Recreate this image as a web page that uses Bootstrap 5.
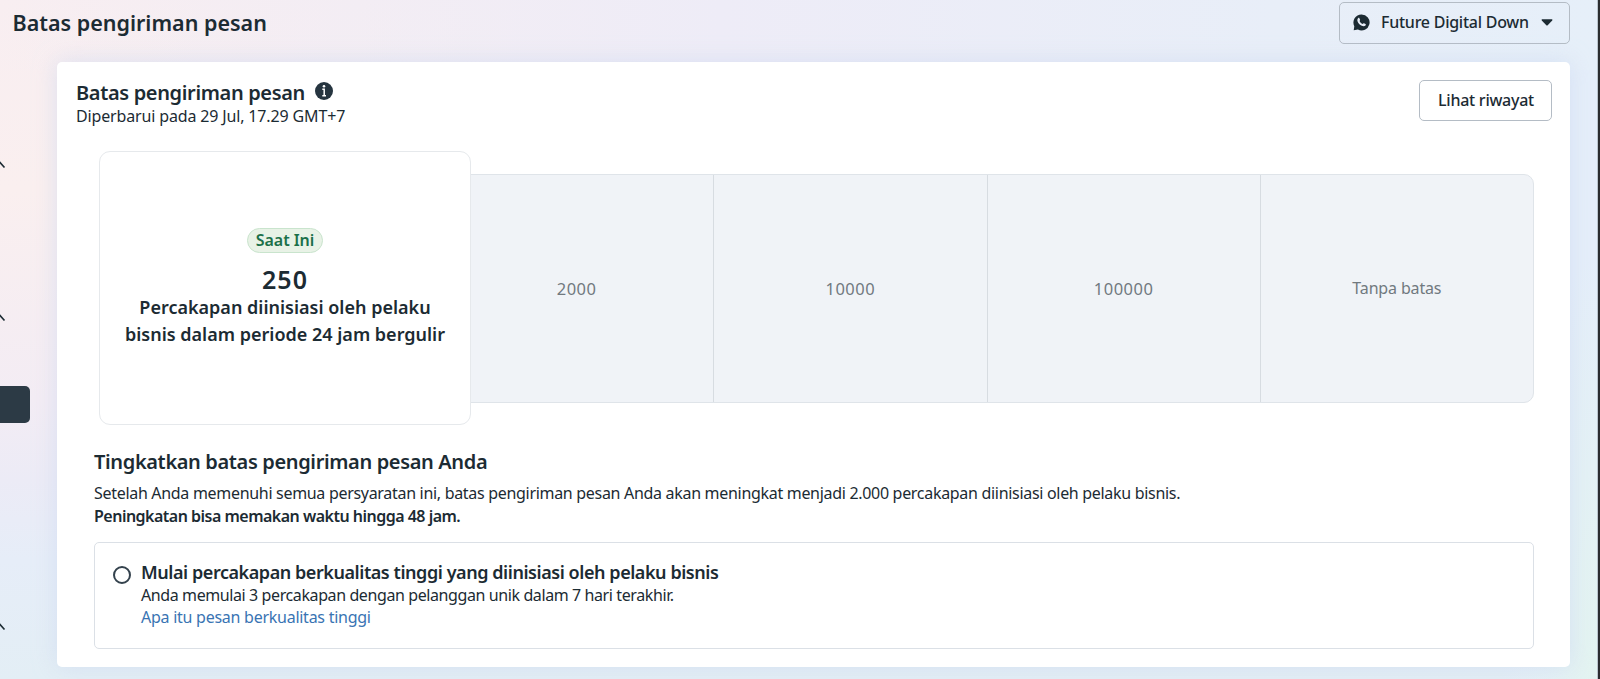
<!DOCTYPE html>
<html lang="id">
<head>
<meta charset="utf-8">
<meta name="viewport" content="width=device-width, initial-scale=1">
<title>Batas pengiriman pesan</title>
<link href="https://cdn.jsdelivr.net/npm/bootstrap@5.3.0/dist/css/bootstrap.min.css" rel="stylesheet">
<style>
  body{font-family:"Noto Sans","Open Sans",sans-serif;font-size:16px;line-height:23px;color:#1c2b33;overflow:hidden;
    background:
      radial-gradient(ellipse 90px 430px at 1600px 679px,#e3f4f0 0,#e3f4f000 100%),
      linear-gradient(90deg,#f9eef000 0,#eeecf7 45%,#e8eef8 80%,#e6eff9 100%) 0 0/100% 70px no-repeat,
      linear-gradient(90deg,#e3edf500 1500px,#e5eefa 1560px) no-repeat,
      linear-gradient(180deg,#f8eef1 0,#faefef 190px,#f3ecf4 400px,#ecebf6 480px,#e6edf8 560px,#e3eef5 679px)}
  .page-frame{height:679px;border-right:2px solid #2a2c2f;box-shadow:inset -1px 0 #b9c4cd}
  .topbar{height:45px;padding:0 28px 0 12.5px}
  .page-title{font-size:21.5px;line-height:28px}
  .btn-meta{height:41px;border:1px solid #b4bcc5;border-radius:5px;color:#1c2b33;font-weight:500;letter-spacing:-.25px;padding:0 17px 1px 18px;background:#fff}
  .btn-picker{height:42px;width:231px;padding:0 16px 1px 13px;margin-top:0;background:transparent}
  .rail{width:57px}
  .rail svg{display:block;height:8px;width:6px}
  .rail-active{width:30px;height:37px;background:#2c3a45;border-radius:0 5px 5px 0}
  .panel{height:605px;width:1513px;padding:19px 18px 0 19px;border-radius:5px;background:#fff;box-shadow:0 0 22px #c9d6ee99}
  .panel-title{font-size:20px;line-height:24px;letter-spacing:-.35px}
  .tiers{margin:0 18px 0 23px;height:274px}
  .tier-now{width:372px;height:274px;margin-right:-32px;padding-top:76px;border:1px solid #e6e9ec;border-radius:11px;background:#fff;z-index:1;font-size:18px;line-height:27px}
  .now-badge{height:25px;line-height:22px;padding:0 8px;border:1px solid #c9e4cd;border-radius:13px;background:#e8f2e6;color:#1b7049;font-size:16px;letter-spacing:-.05px;margin-bottom:11px}
  .now-count{font-size:25px;line-height:30px;letter-spacing:1.1px}
  .tier-rest{height:229px;margin-top:1px;border:1px solid #dfe4e9;border-radius:0 10px 10px 0;background:#f0f3f7;color:#71797f;font-size:16.5px;letter-spacing:.55px;overflow:hidden}
  .tier-rest>div+div{border-left:1px solid #d7dce1}
  .tier-rest .tier-open{font-size:16px;letter-spacing:-.15px}
  .steps{margin:23px 18px 0}
  .steps h2{font-size:20px;line-height:28px;letter-spacing:-.36px;margin-bottom:6px}
  .requirement{height:107px;border:1px solid #dbe0e6;border-radius:5px;padding:17px 18px 0}
  .requirement h3{font-size:18px;line-height:24px;letter-spacing:-.44px}
  .ring{width:18px;height:18px;border:2px solid #34424d;border-radius:50%;margin:6px 10px 0 0}
  .help-link{color:#3974b3}
</style>
</head>
<body>
<div class="page-frame">
  <header class="topbar d-flex align-items-center justify-content-between">
    <h1 class="page-title fw-semibold mb-0">Batas pengiriman pesan</h1>
    <button class="btn btn-meta btn-picker d-flex align-items-center" type="button">
      <svg width="17" height="17" viewBox="0 0 17 17" class="me-2"><path fill="#1c2b33" d="M8.5.5a8 8 0 1 1-3.600 15.100L.7 16.300l.6-4.100A8 8 0 0 1 8.500.5z"/><path fill="#e8eef8" d="M5.200 4.100c.4-.4 1-.4 1.200.1l.7 1.500c.2.4-.6 1-.5 1.400.5 1.300 1.600 2.400 3 2.900.4.1 1-.9 1.400-.7l1.500.8c.5.3.4.9 0 1.400-1 1-2.300 1-4.300 0C6.400 10.600 5.300 9.300 4.600 7.500c-.5-1.400-.2-2.700.6-3.400z"/></svg>
      <span style="margin-left:3px">Future Digital Down</span>
      <svg width="12" height="8" viewBox="0 0 12 8" class="ms-auto"><path fill="#1c2b33" d="M1.300 1.300h9.400c.7 0 .9.7.5 1.200L6.700 7.200a1 1 0 0 1-1.400 0L.8 2.500C.4 2 .6 1.300 1.300 1.300z"/></svg>
    </button>
  </header>
  <div class="d-flex">
    <nav class="rail flex-shrink-0">
      <svg style="margin-top:116px" viewBox="0 0 6 8"><path d="M-4 5.500 0 1.500 4.500 6.500" fill="none" stroke="#1c2b33" stroke-width="1.600"/></svg>
      <svg style="margin-top:145px" viewBox="0 0 6 8"><path d="M-4 5.500 0 1.500 4.500 6.500" fill="none" stroke="#1c2b33" stroke-width="1.600"/></svg>
      <div class="rail-active" style="margin-top:64px"></div>
      <svg style="margin-top:200px" viewBox="0 0 6 8"><path d="M-4 5.500 0 1.500 4.500 6.500" fill="none" stroke="#1c2b33" stroke-width="1.600"/></svg>
    </nav>
    <main class="panel" style="margin-top:17px">
      <div class="d-flex justify-content-between" style="height:70px">
        <div>
          <div class="d-flex">
            <h2 class="panel-title fw-semibold mb-0">Batas pengiriman pesan</h2>
            <svg width="18" height="18" viewBox="0 0 18 18" style="margin:1px 0 0 10px"><circle cx="9" cy="9" r="9" fill="#263540"/><circle cx="9" cy="4.300" r="1.300" fill="#fff"/><path d="M7.300 7.300h1.900v6.500M7.300 13.800h3.700" fill="none" stroke="#fff" stroke-width="1.500"/></svg>
          </div>
          <div style="letter-spacing:-.15px">Diperbarui pada 29 Jul, 17.29 GMT+7</div>
        </div>
        <button class="btn btn-meta" type="button" style="margin-top:-1px">Lihat riwayat</button>
      </div>
      <div class="tiers d-flex align-items-center">
        <div class="tier-now position-relative d-flex flex-column align-items-center flex-shrink-0 text-center fw-semibold">
          <span class="now-badge">Saat Ini</span>
          <div class="now-count">250</div>
          <div>Percakapan diinisiasi oleh pelaku<br>bisnis dalam periode 24 jam bergulir</div>
        </div>
        <div class="tier-rest row g-0 row-cols-4 flex-grow-1 text-center align-items-stretch">
          <div class="col d-flex align-items-center justify-content-center">2000</div>
          <div class="col d-flex align-items-center justify-content-center">10000</div>
          <div class="col d-flex align-items-center justify-content-center">100000</div>
          <div class="col tier-open d-flex align-items-center justify-content-center">Tanpa batas</div>
        </div>
      </div>
      <section class="steps">
        <h2 class="fw-semibold">Tingkatkan batas pengiriman pesan Anda</h2>
        <p class="mb-0" style="letter-spacing:-.305px">Setelah Anda memenuhi semua persyaratan ini, batas pengiriman pesan Anda akan meningkat menjadi 2.000 percakapan diinisiasi oleh pelaku bisnis.</p>
        <p class="fw-semibold" style="letter-spacing:-.51px;margin-bottom:14px">Peningkatan bisa memakan waktu hingga 48 jam.</p>
        <div class="requirement d-flex">
          <span class="ring flex-shrink-0"></span>
          <div>
            <h3 class="fw-semibold mb-0">Mulai percakapan berkualitas tinggi yang diinisiasi oleh pelaku bisnis</h3>
            <div style="letter-spacing:-.4px;line-height:22px">Anda memulai 3 percakapan dengan pelanggan unik dalam 7 hari terakhir.</div>
            <a class="help-link text-decoration-none" href="#" style="letter-spacing:-.26px">Apa itu pesan berkualitas tinggi</a>
          </div>
        </div>
      </section>
    </main>
  </div>
</div>
<script src="https://cdn.jsdelivr.net/npm/bootstrap@5.3.0/dist/js/bootstrap.bundle.min.js"></script>
</body>
</html>
